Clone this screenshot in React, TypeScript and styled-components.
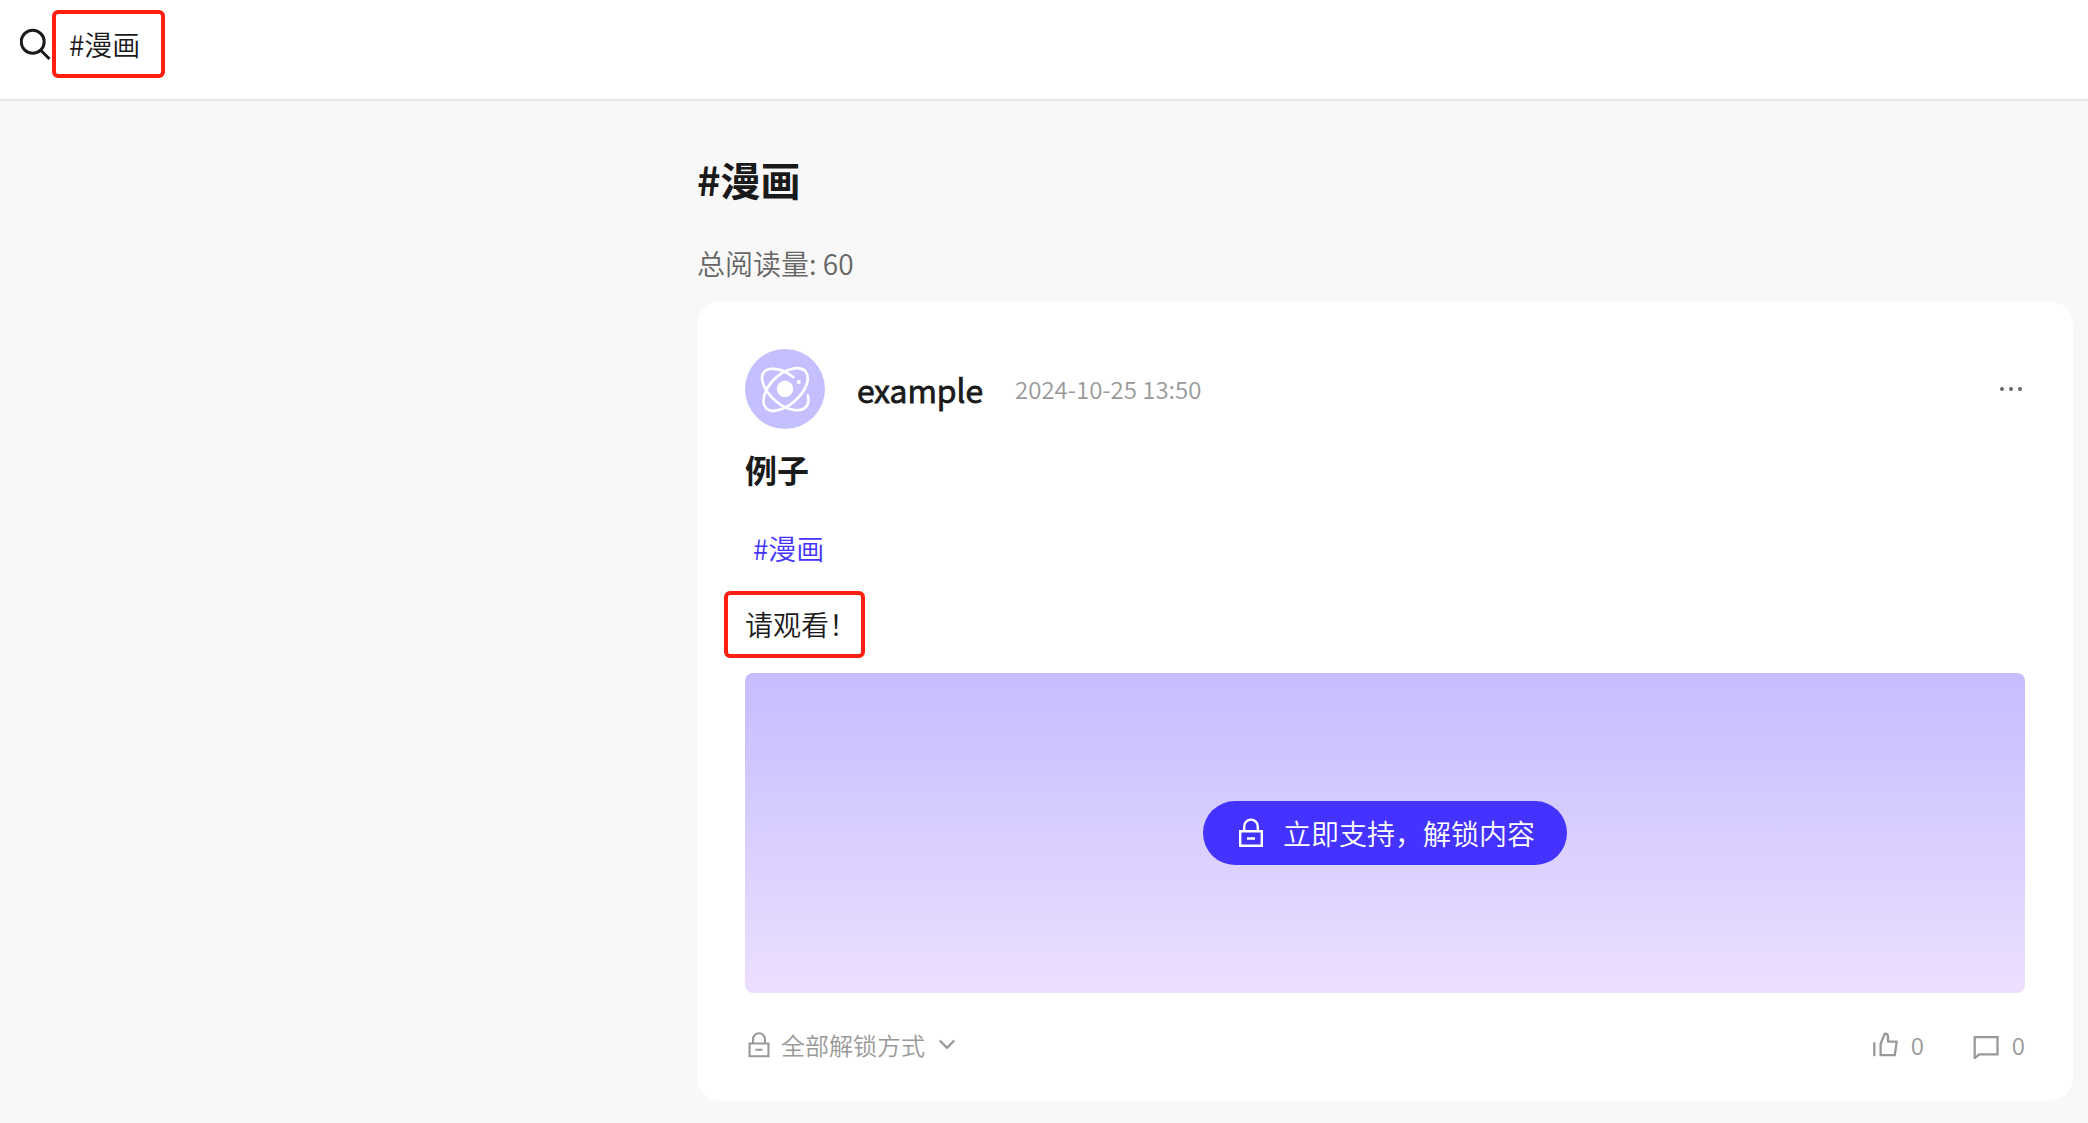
import React, { useState } from "react";
import styled, { createGlobalStyle } from "styled-components";

const GlobalStyle = createGlobalStyle`
  *, *::before, *::after { box-sizing: border-box; }
  body {
    margin: 0;
    background: #f8f8f8;
    color: #1a1a1a;
    font-family: "Noto Sans CJK SC", sans-serif;
    font-size: 28px;
    font-weight: 350;
    line-height: 42px;
  }
  h1, h2, p { margin: 0; }
  button, input {
    font: inherit;
    color: inherit;
    border: 0;
    padding: 0;
    background: none;
  }
  button { cursor: pointer; }
`;

const Header = styled.header`
  display: flex;
  align-items: center;
  gap: 16px;
  padding: 16px 16px 27px 20px;
  background: #fff;
  border-bottom: 2px solid #e6e6e6;
`;

const Marked = styled.div<{ $reach: string }>`
  position: relative;
  width: fit-content;
  &::after {
    content: "";
    position: absolute;
    inset: ${(p) => p.$reach};
    border: 4px solid #ff2012;
    border-radius: 6px;
    pointer-events: none;
  }
`;

const SearchInput = styled.input`
  display: block;
  width: 80px;
  height: 56px;
  outline: none;
`;

const Main = styled.main`
  padding: 48px 15px 20px 697px;
`;

const PageTitle = styled.h1`
  font-size: 40px;
  font-weight: 700;
  line-height: 60px;
`;

const ReadCount = styled.p`
  margin: 33px 0 17px;
  color: #666;
`;

const Card = styled.article`
  padding: 48px 48px 30px;
  border-radius: 24px;
  background: #fff;
`;

const CardHeader = styled.header`
  display: flex;
  align-items: center;
  gap: 32px;
`;

const Author = styled.span`
  font-size: 32px;
  -webkit-text-stroke: 1px currentColor;
`;

const PostDate = styled.time`
  font-size: 24px;
  color: #999;
`;

const MoreButton = styled.button`
  display: flex;
  margin-left: auto;
`;

const PostTitle = styled.h2`
  margin-top: 16px;
  font-size: 32px;
  font-weight: 700;
  line-height: 48px;
`;

const Tag = styled.a`
  display: block;
  width: fit-content;
  margin: 34px 8px;
  color: #4433ff;
  text-decoration: none;
`;

const LockedPanel = styled.section`
  display: flex;
  align-items: center;
  justify-content: center;
  min-height: 320px;
  margin: 28px 0 26px;
  border-radius: 8px;
  background: linear-gradient(#c5bdff, #ecdfff);
`;

const UnlockButton = styled.button`
  display: flex;
  align-items: center;
  gap: 16px;
  height: 64px;
  padding: 0 32px;
  border-radius: 32px;
  background: #4433ff;
  color: #fff;
`;

const CardFooter = styled.footer`
  display: flex;
  align-items: center;
  justify-content: space-between;
  padding: 8px 0;
  color: #999;
  font-size: 24px;
`;

const FooterButton = styled.button<{ $gap: number }>`
  display: flex;
  align-items: center;
  gap: ${(p) => p.$gap}px;
  line-height: 36px;
`;

const Actions = styled.div`
  display: flex;
  gap: 48px;
`;

const SearchIcon = () => (
  <svg width="33" height="36" viewBox="0 0 33 36" fill="none" stroke="#1a1a1a" strokeWidth="3" aria-hidden="true">
    <circle cx="12.7" cy="15.7" r="11.5" />
    <path d="M20.5 24 29.5 33" />
  </svg>
);

const LockIcon = ({ size }: { size: number }) => (
  <svg width={size} height={size} viewBox="0 0 32 32" fill="none" stroke="currentColor" strokeWidth="2.4" aria-hidden="true">
    <path d="M5.2 14.2h21.6v14.6H5.2zM9.2 14V9.4a6.8 6.8 0 0 1 13.6 0V14M12 21.5h8" />
  </svg>
);

const ChevronIcon = () => (
  <svg width="28" height="28" viewBox="0 0 28 28" fill="none" stroke="currentColor" strokeWidth="2.4" aria-hidden="true">
    <path d="m6.8 9.5 7.2 7.3 7.2-7.3" />
  </svg>
);

const ThumbIcon = () => (
  <svg width="28" height="28" viewBox="0 0 28 28" fill="none" stroke="currentColor" strokeWidth="2.3" strokeLinejoin="round" aria-hidden="true">
    <path d="M3.3 11.2v14" />
    <path d="M9.6 24.1V12.7l4.2-10c1.9 0 3.2 1.2 3.2 3v4.9h8.7l-1.9 13.5z" />
  </svg>
);

const CommentIcon = () => (
  <svg width="28" height="28" viewBox="0 0 28 28" fill="none" stroke="currentColor" strokeWidth="2.3" aria-hidden="true">
    <path d="M2.7 6.2h22.8v17.2H7.1l-4.4 3.8z" />
  </svg>
);

const MoreIcon = () => (
  <svg width="28" height="28" viewBox="0 0 28 28" fill="#666" aria-hidden="true">
    <circle cx="5" cy="14" r="2" />
    <circle cx="14" cy="14" r="2" />
    <circle cx="23" cy="14" r="2" />
  </svg>
);

const Avatar = () => (
  <svg width="80" height="80" viewBox="0 0 80 80" fill="none" role="img" aria-label="example">
    <circle cx="40" cy="40" r="40" fill="#c4bfff" />
    <circle cx="40" cy="40" r="8.2" fill="#fff" />
    <circle cx="53.7" cy="33" r="2.1" fill="#fff" />
    <g stroke="#fff" strokeWidth="2.6" strokeLinecap="round">
      <path d="M48.3 28.2C38 19.5 24 17 18.8 23.2c-5 6.8 1.2 20 12.8 29.6C42 61.5 55 63.5 60.5 58.5c2.8-2.8 3.5-7.5 2.3-12.2" />
      <path d="M60.5 22.3c5.5 7 .5 19.7-10.5 29.4-10.5 9.5-24 13-29 7.5-5.5-6.2-1.5-19.4 8.5-29.2C39.8 19.8 54.5 15.8 60.5 22.3z" />
    </g>
  </svg>
);

export default function App() {
  const [query, setQuery] = useState("#漫画");

  return (
    <>
      <GlobalStyle />
      <Header>
        <SearchIcon />
        <Marked $reach="-6px -16px -6px -17px">
          <SearchInput
            aria-label="搜索"
            value={query}
            onChange={(e) => setQuery(e.target.value)}
          />
        </Marked>
      </Header>
      <Main>
        <PageTitle>#漫画</PageTitle>
        <ReadCount>总阅读量: 60</ReadCount>
        <Card>
          <CardHeader>
            <Avatar />
            <Author>example</Author>
            <PostDate dateTime="2024-10-25T13:50">2024-10-25 13:50</PostDate>
            <MoreButton aria-label="更多">
              <MoreIcon />
            </MoreButton>
          </CardHeader>
          <PostTitle>例子</PostTitle>
          <Tag href="#漫画">#漫画</Tag>
          <Marked as="p" $reach="-12px -8px -13px -21px">
            请观看！
          </Marked>
          <LockedPanel>
            <UnlockButton>
              <LockIcon size={32} />
              立即支持，解锁内容
            </UnlockButton>
          </LockedPanel>
          <CardFooter>
            <FooterButton $gap={8}>
              <LockIcon size={28} />
              全部解锁方式
              <ChevronIcon />
            </FooterButton>
            <Actions>
              <FooterButton $gap={12} aria-label="点赞 0">
                <ThumbIcon />0
              </FooterButton>
              <FooterButton $gap={12} aria-label="评论 0">
                <CommentIcon />0
              </FooterButton>
            </Actions>
          </CardFooter>
        </Card>
      </Main>
    </>
  );
}
